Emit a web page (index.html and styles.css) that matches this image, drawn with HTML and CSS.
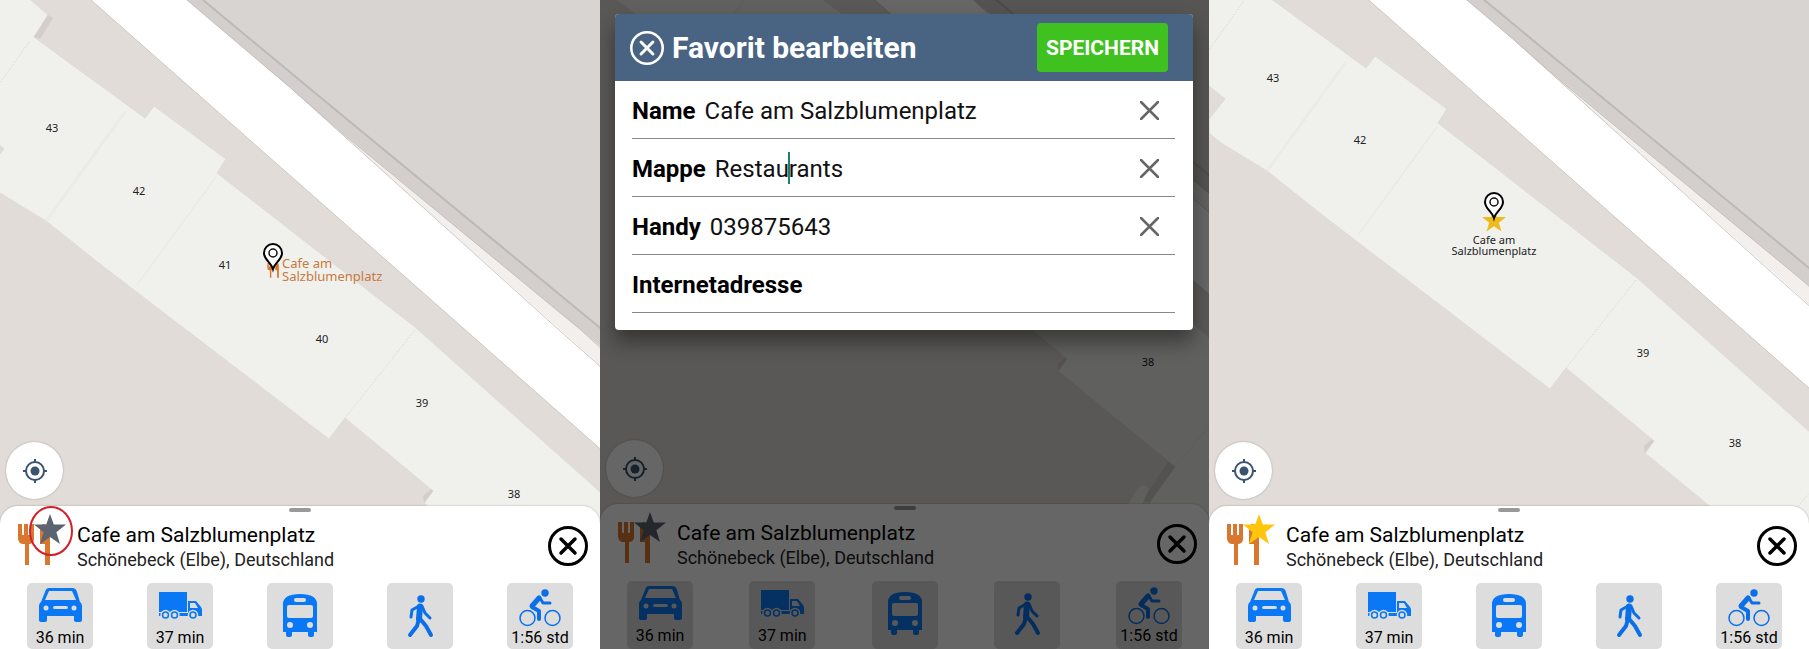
FILE: index.html
```html
<!DOCTYPE html>
<html lang="de">
<head>
    <meta charset="UTF-8">
    <title>Favorit bearbeiten</title>
    <link rel="stylesheet" href="styles.css">
</head>
<body>
    <!-- shared drawings -->
    <svg class="defs" aria-hidden="true">
        <defs>
            <g id="map">
                <path d="M-40 -116 L91 0 L800 625 V800 H-40Z" fill="#e2dcd8"/>
                <path d="M187 0 L-40 -201 H900 V620Z" fill="#d8d4d1"/>
                <path d="M203 0 L599 327 L800 493 V540 L599 346 L293 90 L187 0Z" fill="#d4cfcc"/>
                <path d="M91 0 L-40 -116 V-201 L187 0 L293 90 L599 364 L800 543 V625Z" fill="#fff"/>
                <path d="M293 90 L347 137 L581 330 L800 515 V543 L599 364Z" fill="#f3efec"/>
                <path d="M91 0 L800 625 M293 90 L559 330 L800 543" stroke="#cfc8c2" fill="none"/>
                <path d="M187 0 L293 90 L347 137 L581 330 L800 530" stroke="#c4beba" fill="none"/>
                <path d="M203 0 L320 97 L599 327 L800 493" stroke="#bdb9b6" stroke-width="2" fill="none"/>
                <path class="building" d="M-40 -50 L31 0 L48 15 L34 37 L145 118 L154 106 L226 159 L217 173 L415 327 L599 491 L800 670 V800 H480 L516 634 L541 599 L424 503 L433 491 L345 418 L329 439 L100 264 L46 221 L0 193 L-12 183 L-12 169 L4 149 L-12 136 L-40 118Z"/>
                <path d="M29 42 L-12 100 M415 330 L345 418 M599 530 L541 599" stroke="#d2d2cd" stroke-dasharray="1 2" fill="none"/>
                <path d="M216 177 L137 285" stroke="#e6e7e2" fill="none"/>
                <path d="M125 112 L46 221" stroke="#ebece8" stroke-width="3"/>
                <path d="M433 491 L424 503 L423 496 L431 489Z M541 599 L516 634 L508 634 L534 593Z M48 15 L34 37 L40 39 L53 18Z" fill="#d3cecb"/>
                <path d="M490 644 L504 620 Q510 615 514 620 Q515 623 504 644Z" fill="#eeeeea"/>
            </g>
            <g id="pin">
                <path d="M0 25 C-2 18 -9 16 -9 9 A9 9 0 0 1 9 9 C9 16 2 18 0 25Z" fill="#fff" stroke="#000" stroke-width="2"/>
                <circle cy="9" r="4" fill="none" stroke="#111" stroke-width="1.5"/>
            </g>
            <path id="star" d="M0 -16 L3.8 -5.500 H16 L6.400 2.200 L10 14 L0 7 L-10 14 L-6.400 2.200 L-16 -5.500 H-3.800Z"/>
            <g id="fork">
                <path d="M1 0h4v11h2V0h4v11h2V0h4v15q0 4-4 5h-1v21H8V20H6q-4 0-5-5Z"/>
                <path d="M26 0q7 0 7 6v35h-5V20h-5V6q0-5 3-6Z"/>
            </g>
            <g id="locate" fill="none" stroke="#3a5370" stroke-width="2">
                <circle cx="12" cy="12" r="9"/>
                <circle cx="12" cy="12" r="4.500" fill="#3a5370" stroke="none"/>
                <path d="M12 0v4M12 20v4M0 12h4M20 12h4"/>
            </g>
            <g id="close" fill="none" stroke="currentColor" stroke-width="3">
                <circle cx="20" cy="20" r="18.500"/>
                <path d="M13 13L27 27M27 13L13 27" stroke-width="3.500" stroke-linecap="round"/>
            </g>
            <path id="cross" d="M1 1L18 18M18 1L1 18" fill="none" stroke="currentColor" stroke-width="2.500" stroke-linecap="round"/>

            <g id="car">
                <path fill-rule="evenodd" d="M22 5h23q4 0 5 4l3 10q2 1 2 5v13q0 2-3 2h-2q-3 0-3-2v-4H20v4q0 2-3 2h-2q-3 0-3-2V24q0-4 2-5l4-10q1-4 4-4Z M22 8l-4 9h31l-4-9Z M28 23q-2 0-2 1.500t2 1.500h11q2 0 2-1.500t-2-1.500Z"/>
                <circle cx="19" cy="25" r="2.500" fill="#ddd"/>
                <circle cx="47" cy="25" r="2.500" fill="#ddd"/>
            </g>
            <g id="truck">
                <path fill-rule="evenodd" d="M12 9h28v20H12Z M41 18h8l5 6 1 2v7H12v-3h29Z M43 20v5h8l-3-5Z"/>
                <g fill="#0a78f5" stroke="#ddd" stroke-width="1.500">
                    <circle cx="18.500" cy="32" r="4.500"/>
                    <circle cx="27.500" cy="32" r="4.500"/>
                    <circle cx="46" cy="32" r="4.500"/>
                </g>
                <g fill="#ddd">
                    <circle cx="18.500" cy="32" r="2.200"/>
                    <circle cx="27.500" cy="32" r="2.200"/>
                    <circle cx="46" cy="32" r="2.200"/>
                </g>
            </g>
            <g id="bus">
                <path d="M16 21q0-10 17-10t17 10v28h-3v3q0 2-3 2t-3-2v-3H25v3q0 2-3 2t-3-2v-3h-3Z"/>
                <g fill="#ddd">
                    <rect x="27" y="15" width="12" height="4" rx="2"/>
                    <rect x="20" y="22" width="26" height="13" rx="2"/>
                    <circle cx="23" cy="42" r="3"/>
                    <circle cx="43" cy="42" r="3"/>
                </g>
            </g>
            <g id="walk" fill="none" stroke="#0a6fe8" stroke-linecap="round" stroke-linejoin="round">
                <circle cx="34" cy="16" r="3.700" fill="#0a6fe8" stroke="none"/>
                <path d="M32 23L25 27L24 34M35 23L38 30L43 35" stroke-width="3"/>
                <path d="M33 23.500L32 36" stroke-width="6"/>
                <path d="M32 36L30 43L23 52M34 37L39 43L44 52" stroke-width="4"/>
            </g>
            <g id="bike" fill="none" stroke="#0a6fe8" stroke-linecap="round" stroke-linejoin="round">
                <circle cx="38" cy="10" r="3.700" fill="#0a6fe8" stroke="none"/>
                <circle cx="20.500" cy="35" r="7.500" stroke-width="1.500"/>
                <circle cx="45.500" cy="35" r="7.500" stroke-width="1.500"/>
                <path d="M32 15L25 23" stroke-width="5"/>
                <path d="M33 15L36 20H43" stroke-width="3"/>
                <path d="M25 24L32 28V36" stroke-width="4"/>
            </g>
        </defs>
    </svg>

    <main class="screens">
        <section class="screen">
            <svg class="map">
                <use href="#map"/>
                <g class="house">
                    <text x="52" y="132">43</text>
                    <text x="139" y="195">42</text>
                    <text x="225" y="269">41</text>
                    <text x="322" y="343">40</text>
                    <text x="422" y="407">39</text>
                    <text x="514" y="498">38</text>
                </g>
                <use href="#fork" transform="translate(267 263) scale(.36)" class="fork"/>
                <g class="poi">
                    <text x="282" y="268">Cafe am</text>
                    <text x="282" y="281">Salzblumenplatz</text>
                </g>
                <use href="#pin" x="273" y="244"/>
            </svg>
            <button class="btn-locate" aria-label="Standort"><svg width="24" height="24"><use href="#locate"/></svg></button>
            <div class="sheet">
                <div class="handle"></div>
                <div class="place">
                    <svg class="place-icon" viewBox="17 507 60 60">
                        <use href="#fork" x="17" y="525" class="fork"/>
                        <use href="#star" x="50" y="531" fill="#5b6470"/>
                        <ellipse cx="51" cy="532" rx="21" ry="24" class="marker"/>
                    </svg>
                    <div class="place-text">
                        <h2>Cafe am Salzblumenplatz</h2>
                        <p>Schönebeck (Elbe), Deutschland</p>
                    </div>
                    <button class="btn-close" aria-label="Schließen"><svg width="40" height="40"><use href="#close"/></svg></button>
                </div>
                <div class="routes">
                    <button class="route"><svg width="66" height="44"><use href="#car"/></svg>36 min</button>
                    <button class="route"><svg width="66" height="44"><use href="#truck"/></svg>37 min</button>
                    <button class="route" aria-label="Bus"><svg width="66" height="66"><use href="#bus"/></svg></button>
                    <button class="route" aria-label="Zu Fuß"><svg width="66" height="66"><use href="#walk"/></svg></button>
                    <button class="route"><svg width="66" height="44"><use href="#bike"/></svg>1:56 std</button>
                </div>
            </div>
        </section>

        <section class="screen screen-edit">
            <svg class="map">
                <use href="#map" x="34" y="-132"/>
                <g class="house">
                    <text x="548" y="366">38</text>
                </g>
            </svg>
            <button class="btn-locate" aria-label="Standort"><svg width="24" height="24"><use href="#locate"/></svg></button>
            <div class="sheet">
                <div class="handle"></div>
                <div class="place">
                    <svg class="place-icon" viewBox="17 507 60 60">
                        <use href="#fork" x="17" y="525" class="fork"/>
                        <use href="#star" x="50" y="531" fill="#5b6470"/>
                    </svg>
                    <div class="place-text">
                        <h2>Cafe am Salzblumenplatz</h2>
                        <p>Schönebeck (Elbe), Deutschland</p>
                    </div>
                    <button class="btn-close" aria-label="Schließen"><svg width="40" height="40"><use href="#close"/></svg></button>
                </div>
                <div class="routes">
                    <button class="route"><svg width="66" height="44"><use href="#car"/></svg>36 min</button>
                    <button class="route"><svg width="66" height="44"><use href="#truck"/></svg>37 min</button>
                    <button class="route" aria-label="Bus"><svg width="66" height="66"><use href="#bus"/></svg></button>
                    <button class="route" aria-label="Zu Fuß"><svg width="66" height="66"><use href="#walk"/></svg></button>
                    <button class="route"><svg width="66" height="44"><use href="#bike"/></svg>1:56 std</button>
                </div>
            </div>

            <div class="overlay">
                <form class="dialog">
                    <div class="dialog-header">
                        <button type="button" class="btn-cancel" aria-label="Abbrechen"><svg width="34" height="34" viewBox="0 0 40 40"><use href="#close"/></svg></button>
                        <h1>Favorit bearbeiten</h1>
                        <button type="button" class="btn-save">SPEICHERN</button>
                    </div>
                    <div class="fields">
                        <div class="field">
                            <label for="name">Name</label>
                            <div class="value"><input type="text" id="name" value="Cafe am Salzblumenplatz"></div>
                            <button type="button" class="btn-clear" aria-label="Löschen"><svg width="19" height="19"><use href="#cross"/></svg></button>
                        </div>
                        <div class="field">
                            <label for="folder">Mappe</label>
                            <div class="value"><input type="text" id="folder" value="Restaurants"><span class="caret"></span></div>
                            <button type="button" class="btn-clear" aria-label="Löschen"><svg width="19" height="19"><use href="#cross"/></svg></button>
                        </div>
                        <div class="field">
                            <label for="phone">Handy</label>
                            <div class="value"><input type="text" id="phone" value="039875643"></div>
                            <button type="button" class="btn-clear" aria-label="Löschen"><svg width="19" height="19"><use href="#cross"/></svg></button>
                        </div>
                        <div class="field">
                            <label for="web">Internetadresse</label>
                            <div class="value"><input type="text" id="web"></div>
                        </div>
                    </div>
                </form>
            </div>
        </section>

        <section class="screen">
            <svg class="map">
                <use href="#map" x="12" y="-50"/>
                <g class="house">
                    <text x="64" y="82">43</text>
                    <text x="151" y="144">42</text>
                    <text x="434" y="357">39</text>
                    <text x="526" y="447">38</text>
                    <text x="285" y="244">Cafe am</text>
                    <text x="285" y="255">Salzblumenplatz</text>
                </g>
                <use href="#star" transform="translate(285 221) scale(.75)" fill="#eebb1c"/>
                <use href="#pin" x="285" y="193"/>
            </svg>
            <button class="btn-locate" aria-label="Standort"><svg width="24" height="24"><use href="#locate"/></svg></button>
            <div class="sheet">
                <div class="handle"></div>
                <div class="place">
                    <svg class="place-icon" viewBox="17 507 60 60">
                        <use href="#fork" x="17" y="525" class="fork"/>
                        <use href="#star" x="50" y="531" fill="#ffc60b"/>
                    </svg>
                    <div class="place-text">
                        <h2>Cafe am Salzblumenplatz</h2>
                        <p>Schönebeck (Elbe), Deutschland</p>
                    </div>
                    <button class="btn-close" aria-label="Schließen"><svg width="40" height="40"><use href="#close"/></svg></button>
                </div>
                <div class="routes">
                    <button class="route"><svg width="66" height="44"><use href="#car"/></svg>36 min</button>
                    <button class="route"><svg width="66" height="44"><use href="#truck"/></svg>37 min</button>
                    <button class="route" aria-label="Bus"><svg width="66" height="66"><use href="#bus"/></svg></button>
                    <button class="route" aria-label="Zu Fuß"><svg width="66" height="66"><use href="#walk"/></svg></button>
                    <button class="route"><svg width="66" height="44"><use href="#bike"/></svg>1:56 std</button>
                </div>
            </div>
        </section>
    </main>
</body>
</html>
```

FILE: styles.css
```css
* {
    box-sizing: border-box;
}

body {
    margin: 0;
    font-family: Roboto, sans-serif;
    color: #000;
}

h1, h2, p {
    margin: 0;
}

button {
    padding: 0;
    border: none;
    background: none;
    font-family: inherit;
    color: inherit;
    cursor: pointer;
}

svg {
    display: block;
}

.defs {
    position: absolute;
    width: 0;
    height: 0;
}

.screens {
    display: grid;
    grid-template-columns: 600fr 609fr 600fr;
    min-height: 100vh;
}

.screen {
    position: relative;
    display: flex;
    flex-direction: column;
    justify-content: flex-end;
    align-items: flex-start;
    overflow: hidden;
    background-color: #e2dcd8;
}

/* map */
.map {
    position: absolute;
    inset: 0;
    width: 100%;
    height: 100%;
}

.building {
    fill: #f0f1ed;
    stroke: #dfdcd7;
}

.house {
    font: 11px "Noto Sans", sans-serif;
    fill: #222;
    text-anchor: middle;
}

.poi {
    font: 13px "Noto Sans", sans-serif;
    fill: #c77a3e;
}

.fork {
    fill: #d9772e;
}

.marker {
    fill: none;
    stroke: #d3202a;
    stroke-width: 2;
}

.btn-locate {
    position: relative;
    display: flex;
    align-items: center;
    justify-content: center;
    width: 57px;
    height: 57px;
    margin: 0 0 7px 6px;
    border-radius: 50%;
    background-color: #fff;
    box-shadow: 0 0 2px rgba(0, 0, 0, 0.3);
}

/* bottom sheet */
.sheet {
    position: relative;
    width: 100%;
    padding-top: 2px;
    border-radius: 18px 18px 0 0;
    background-color: #fff;
    box-shadow: 0 0 2px rgba(0, 0, 0, 0.3);
}

.handle {
    width: 22px;
    height: 4px;
    margin: 0 auto;
    border-radius: 2px;
    background-color: #999;
}

.place {
    display: flex;
    align-items: flex-end;
    height: 54px;
    padding: 0 12px 0 17px;
}

.place-icon {
    width: 60px;
    height: 60px;
    flex: none;
}

.place-text {
    flex: 1;
    height: 44px;
}

.place-text h2 {
    font-size: 21px;
    font-weight: 400;
    line-height: 26px;
}

.place-text p {
    font-size: 18px;
    line-height: 24px;
    color: #222;
}

.routes {
    display: flex;
    justify-content: space-between;
    padding: 17px 27px 0;
}

.route {
    display: flex;
    flex-direction: column;
    align-items: center;
    width: 66px;
    height: 66px;
    border-radius: 5px;
    background-color: #ddd;
    font-size: 16px;
    line-height: 22px;
    white-space: nowrap;
}

.route svg {
    flex: none;
    fill: #0a78f5;
}

.screen-edit .route {
    height: 68px;
}

/* dialog */
.overlay {
    position: absolute;
    inset: 0;
    padding: 14px 16px 0 15px;
    background-color: rgba(0, 0, 0, 0.6);
}

.dialog {
    overflow: hidden;
    border-radius: 4px;
    background-color: #fff;
    box-shadow: 0 12px 20px rgba(0, 0, 0, 0.4);
}

.dialog-header {
    display: flex;
    align-items: center;
    height: 67px;
    padding: 0 25px 0 15px;
    background-color: #486482;
    color: #fff;
}

.dialog-header h1 {
    flex: 1;
    margin-left: 8px;
    font-size: 30px;
    font-weight: 700;
    line-height: 40px;
}

.btn-save {
    width: 131px;
    height: 49px;
    border-radius: 4px;
    background-color: #3fc11f;
    color: #fff;
    font-size: 21px;
    font-weight: 700;
}

.fields {
    padding: 0 18px 17px 17px;
}

.field {
    display: flex;
    align-items: center;
    height: 58px;
    padding: 2px 16px 0 0;
    border-bottom: 1px solid #888;
    font-size: 24px;
}

.field label {
    font-weight: 700;
}

.value {
    position: relative;
    flex: 1;
    margin-left: 9px;
}

.value input {
    width: 100%;
    padding: 0;
    border: none;
    outline: none;
    background: none;
    font: inherit;
    color: #111;
}

.caret {
    position: absolute;
    top: -3px;
    left: 73px;
    width: 2px;
    height: 32px;
    background-color: #1c8070;
}

.btn-clear {
    color: #666;
}
```
